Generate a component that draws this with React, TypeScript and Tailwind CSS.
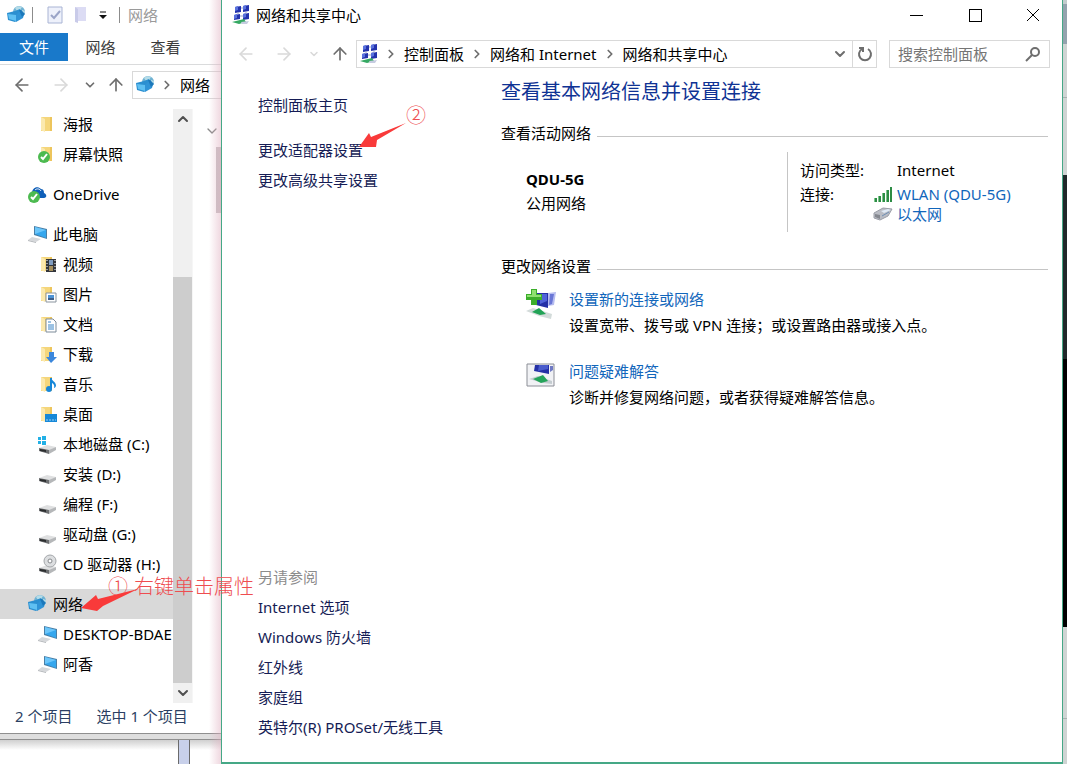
import type { ReactNode } from "react";
import { ArrowLeft, ArrowRight, ArrowUp, ChevronDown, ChevronRight, ChevronUp } from "lucide-react";

function NetworkIcon() {
  return (
    <svg className="h-5 w-5 shrink-0" viewBox="0 0 20 20">
      <circle cx="13" cy="7" r="6" fill="#6fb2d2" />
      <path d="M9 3c2-2 5-2 7-1l-2 3-3 1zM16 5l3 1c0 3-1 5-3 6z" fill="#b5dce8" />
      <path d="M1 8l8-2 5-2 1 9-6 4-7-2z" fill="#2b8fd0" />
      <path d="M2 9l8 1 0 6-7-2z" fill="#5fc0f2" />
      <path d="M10 10l5-5 3 4-1 4-7 4z" fill="#2f93d6" />
      <path d="M13 5l2 0 4 4-3 3z" fill="#1c78ba" />
    </svg>
  );
}

function ComputerIcon() {
  return (
    <svg className="h-5 w-5 shrink-0" viewBox="0 0 20 20">
      <path d="M7 2l13 3v10L7 11z" fill="#4a7fa6" />
      <path d="M8 3l11 3v8L8 10z" fill="#35a7ee" />
      <path d="M8 3l11 3-11 4z" fill="#6cc6fa" />
      <path d="M5 13l9 2-5 3-8-2z" fill="#d6d8db" />
      <path d="M1 16l8 2v1l-8-2z" fill="#b4b7bb" />
    </svg>
  );
}

function OneDriveIcon() {
  return (
    <svg className="h-5 w-5 shrink-0" viewBox="0 0 20 20">
      <path d="M5 9c0-5 5-8 9-4 3 0 3 3 3 4 3 1 3 5 0 5H8z" fill="#0f5fb8" />
      <path d="M8 6c2-2 5-1 6 1" stroke="#fff" strokeWidth="1" fill="none" />
      <circle cx="7" cy="13" r="6" fill="#4cba50" />
      <path d="M4 13l2 2 4-5" stroke="#fff" strokeWidth="2" fill="none" />
    </svg>
  );
}

// Yellow folder with an optional badge drawn over its lower right corner
function FolderIcon({ children }: { children?: ReactNode }) {
  return (
    <svg className="h-5 w-5 shrink-0" viewBox="0 0 20 20">
      <path d="M4 3h11v14H4z" fill="#f5d67b" />
      <path d="M4 3l4 2v13l-4-2z" fill="#fbe9ae" />
      <path d="M13 3h2v14h-2z" fill="#edc55c" />
      {children}
    </svg>
  );
}

function DriveIcon({ children }: { children?: ReactNode }) {
  return (
    <svg className="h-5 w-5 shrink-0" viewBox="0 0 20 20">
      <path d="M2 14l8-3 9 2-7 4z" fill="#dfe0e1" />
      <path d="M2 14l10 2v4L2 17z" fill="#6c6e70" />
      <path d="M12 16l7-3v3l-7 4z" fill="#b5b7b9" />
      <path d="M3 15l6 1v2l-6-1z" fill="#2b2d2f" />
      {children}
    </svg>
  );
}

function CenterIcon() {
  return (
    <svg className="h-5 w-5 shrink-0" viewBox="0 0 20 20">
      <path d="M4 2l6-1v6l-6 1zM12 1l6-1v6l-6 1zM3 10l6-1v5l-6 1zM12 9l6-1v6l-6 1z" fill="#2433ad" />
      <path d="M4 2l3-1v4l-3 1zM12 1l3-1v4l-3 1zM3 10l3-1v4l-3 1zM12 9l3-1v4l-3 1z" fill="#5a72dd" />
      <path d="M10 3h2M9 11h3M7 7v2M15 7v2" stroke="#9aa3c8" />
      <path d="M1 17l12-3 2 3-7 2z" fill="#35a862" />
      <path d="M10 17l8-1-2 3-5 0z" fill="#c6cbe0" />
    </svg>
  );
}

function SetupIcon() {
  return (
    <svg className="h-[30px] w-[30px] shrink-0" viewBox="0 0 30 30">
      <path d="M11 4h11v15l-12-3z" fill="#2430a6" />
      <path d="M14 5h7v7l-7 3z" fill="#5063d8" />
      <path d="M22 4l8-1-2 13-6 1z" fill="#b7bdf0" />
      <path d="M24 5h4l-2 10-3 1z" fill="#6a77d6" />
      <path d="M0 22l7-3 19 6-1 5-12-3z" fill="#d3dbda" />
      <path d="M6 23l7-4 7 6-6 1z" fill="#22a356" />
      <path d="M5 0h6v5h5v6h-5v5H5v-5H0V5h5z" fill="#3cae2b" />
      <path d="M6 1h4v5h5v2H1V6h5z" fill="#8fe070" />
    </svg>
  );
}

function TroubleshootIcon() {
  return (
    <svg className="h-[30px] w-[30px] shrink-0" viewBox="0 0 30 30">
      <path d="M1 3h27v22H1z" fill="#f1f2f5" stroke="#8b8e96" />
      <path d="M9 4h14v9L8 10z" fill="#2430a6" />
      <path d="M13 4h9v4l-10 2z" fill="#4a5ccc" />
      <path d="M24 5h3v4l-3 2z" fill="#6f79c5" />
      <path d="M3 18l9-3 14 5v3l-9-1z" fill="#c4ccd0" />
      <path d="M7 18l10-4 5 6-7 2z" fill="#25a45a" />
    </svg>
  );
}

const tree = [
  { name: "海报", icon: <FolderIcon />, child: true },
  {
    name: "屏幕快照",
    child: true,
    icon: (
      <FolderIcon>
        <circle cx="7" cy="13" r="6" fill="#4cba50" />
        <path d="M4 13l2 2 4-5" stroke="#fff" strokeWidth="2" fill="none" />
      </FolderIcon>
    ),
  },
  { name: "OneDrive", icon: <OneDriveIcon />, gap: true },
  { name: "此电脑", icon: <ComputerIcon />, gap: true },
  {
    name: "视频",
    child: true,
    icon: (
      <FolderIcon>
        <path d="M9 5h10v13H9z" fill="#33363c" />
        <path d="M12 6h4v5h-4z" fill="#7f9cc0" />
        <path d="M12 12h4v5h-4z" fill="#a58f5d" />
        <path d="M10 6v12M18 6v12" stroke="#fff" strokeDasharray="1 2" />
      </FolderIcon>
    ),
  },
  {
    name: "图片",
    child: true,
    icon: (
      <FolderIcon>
        <path d="M9 9h10v9H9z" fill="#fff" stroke="#8a949e" />
        <path d="M11 11h6v3h-6z" fill="#4d93d6" />
        <path d="M11 14h6v2h-6z" fill="#3f5f8a" />
      </FolderIcon>
    ),
  },
  {
    name: "文档",
    child: true,
    icon: (
      <FolderIcon>
        <path d="M9 5h7l3 3v10H9z" fill="#fff" stroke="#7c8b99" />
        <path d="M11 8h3M11 11h6M11 13h6M11 15h6" stroke="#3a86c8" />
      </FolderIcon>
    ),
  },
  {
    name: "下载",
    child: true,
    icon: (
      <FolderIcon>
        <path d="M12 8h5v5h3l-6 6-5-6h3z" fill="#3b87dc" />
      </FolderIcon>
    ),
  },
  {
    name: "音乐",
    child: true,
    icon: (
      <FolderIcon>
        <path d="M14 4v11" stroke="#1787d8" strokeWidth="2" />
        <path d="M14 3c0 4 5 4 5 9-1 2-2 2-2 2 1-3-1-5-3-5z" fill="#1787d8" />
        <ellipse cx="12" cy="15" rx="3" ry="3" fill="#1787d8" />
      </FolderIcon>
    ),
  },
  {
    name: "桌面",
    child: true,
    icon: (
      <FolderIcon>
        <path d="M8 10h12v8H8z" fill="#1688d8" />
        <path d="M9 16h10" stroke="#9bd1f5" strokeDasharray="2 1" />
      </FolderIcon>
    ),
  },
  {
    name: "本地磁盘 (C:)",
    child: true,
    icon: (
      <DriveIcon>
        <path d="M1 3h3v3H1zM5 2h4v4H5zM1 7h3v3H1zM5 7h4v4H5z" fill="#22b0e6" />
      </DriveIcon>
    ),
  },
  { name: "安装 (D:)", icon: <DriveIcon />, child: true },
  { name: "编程 (F:)", icon: <DriveIcon />, child: true },
  { name: "驱动盘 (G:)", icon: <DriveIcon />, child: true },
  {
    name: "CD 驱动器 (H:)",
    child: true,
    icon: (
      <DriveIcon>
        <circle cx="13" cy="7" r="6" fill="#dcdee0" stroke="#a4a7aa" />
        <circle cx="13" cy="7" r="2" fill="#fff" stroke="#85888b" />
      </DriveIcon>
    ),
  },
  { name: "网络", icon: <NetworkIcon />, gap: true, selected: true },
  { name: "DESKTOP-BDAE", icon: <ComputerIcon />, child: true },
  { name: "阿香", icon: <ComputerIcon />, child: true },
];

const seeAlso = ["Internet 选项", "Windows 防火墙", "红外线", "家庭组", "英特尔(R) PROSet/无线工具"];

function Explorer() {
  return (
    <section className="relative flex w-[221px] shrink-0 flex-col overflow-hidden bg-white">
      <header className="flex h-[33px] items-center pb-1 pl-1.5">
        <NetworkIcon />
        <span className="ml-1.5 h-4 w-px bg-[#8c8c8c]" />
        <button aria-label="属性" className="ml-3.5">
          <svg className="h-[18px] w-4" viewBox="0 0 16 18">
            <path d="M1 1h14v16H1z" fill="#eef1fb" stroke="#a9b4d4" />
            <path d="M4 9l3 3 6-7" stroke="#9ba5c8" strokeWidth="2" fill="none" />
          </svg>
        </button>
        <button aria-label="新建文件夹" className="ml-3">
          <svg className="h-[18px] w-3" viewBox="0 0 12 18">
            <path d="M0 1h11v14H0z" fill="#dcdcf4" />
            <path d="M0 1l3 2v14l-3-1z" fill="#c9cbe9" />
          </svg>
        </button>
        <button aria-label="自定义快速访问工具栏" className="ml-3">
          <svg className="h-2 w-2" viewBox="0 0 8 8">
            <path d="M1 1h6" stroke="#111" />
            <path d="M0 4h8L4 8z" fill="#111" />
          </svg>
        </button>
        <span className="ml-3 h-4 w-px bg-[#8c8c8c]" />
        <span className="ml-2 text-[#9a9a9a]">网络</span>
      </header>
      <nav className="flex h-8 items-start border-b border-[#dadbdc] text-[#3c3c3c]">
        <button className="h-7 w-[68px] bg-[#1979ca] text-white">文件</button>
        <button className="h-7 w-[65px]">网络</button>
        <button className="h-7 w-[65px]">查看</button>
      </nav>
      <div className="flex h-11 shrink-0 items-center pb-1 text-[#6e6e6e]">
        <button aria-label="后退" className="flex w-11 justify-center"><ArrowLeft size={20} /></button>
        <button aria-label="前进" className="flex w-[34px] justify-center text-[#d9d9d9]"><ArrowRight size={20} /></button>
        <button aria-label="最近浏览的位置" className="flex w-6 justify-center"><ChevronDown size={14} strokeWidth={3} /></button>
        <button aria-label="上移" className="flex w-7 justify-center"><ArrowUp size={20} /></button>
        <div className="ml-0.5 flex h-7 flex-1 items-center border border-r-0 border-[#d9d9d9] pl-0.5">
          <NetworkIcon />
          <ChevronRight size={14} strokeWidth={3} className="mr-1.5 ml-[5px]" />
          <span className="text-black">网络</span>
        </div>
      </div>
      <div className="flex flex-1">
        <ul className="w-[173px] overflow-hidden pb-6">
          {tree.map((item) => (
            <li key={item.name} className={item.gap ? "mt-2.5" : ""}>
              <a
                href="#"
                className={`flex h-[30px] items-center gap-1.5 whitespace-nowrap ${item.child ? "pl-[37px]" : "pl-[27px]"} ${item.selected ? "bg-[#d9d9d9]" : ""}`}
              >
                {item.icon}
                {item.name}
              </a>
            </li>
          ))}
        </ul>
        <div className="flex w-[19px] flex-col bg-[#f0f0f0] text-[#505050]">
          <button aria-label="向上滚动" className="flex h-5 items-center justify-center"><ChevronUp size={16} strokeWidth={3} /></button>
          <div className="flex flex-1 flex-col pt-[148px]">
            <div className="flex-1 bg-[#cdcdcd]" />
          </div>
          <button aria-label="向下滚动" className="flex h-5 items-center justify-center"><ChevronDown size={16} strokeWidth={3} /></button>
        </div>
        <div className="flex flex-1 flex-col items-end border-l border-[#f6f6f6] pt-3.5 text-[#8a8a8a]">
          <ChevronDown size={16} strokeWidth={2} className="mr-px" />
          <div className="mt-2 h-[66px] w-[5px] bg-[#c8c2c5]" />
        </div>
      </div>
      <footer className="flex h-[30px] items-center gap-6 pb-1 pl-[15px] text-[#2b3f63]">
        <span>2 个项目</span>
        <span>选中 1 个项目</span>
      </footer>
      <div className="h-[7px] border-y border-[#8f8f8f] bg-[#dedede]" />
      <div className="flex h-[25px] bg-linear-to-b from-[#d0d0d0] to-white to-40% pl-[178px]">
        <div className="w-3 border-x border-[#6b6b6b] bg-[#c8d0ea]" />
      </div>
      {/* shade that the front window casts */}
      <div className="pointer-events-none absolute inset-y-0 right-0 w-3 bg-linear-to-r from-transparent to-[#e0b0c0]/50" />
    </section>
  );
}

function SectionTitle({ children }: { children: ReactNode }) {
  return (
    <div className="flex items-center gap-1.5">
      <h2>{children}</h2>
      <span className="mt-1.5 h-px flex-1 bg-[#c5c5c5]" />
    </div>
  );
}

function SharingCenter() {
  return (
    <section className="flex flex-1 flex-col border border-t-0 border-b-2 border-[#45a886] bg-white">
      <header className="flex h-[29px] items-center gap-[5px] pl-[9px]">
        <CenterIcon />
        <h1 className="flex-1">网络和共享中心</h1>
        <div className="flex">
          <button aria-label="最小化" className="flex w-[58px] justify-center">
            <svg className="h-3.5 w-3.5" viewBox="0 0 14 14" fill="none" stroke="#000" shapeRendering="crispEdges">
              <path d="M0 7h13" />
            </svg>
          </button>
          <button aria-label="最大化" className="flex w-[58px] justify-center">
            <svg className="h-3.5 w-3.5" viewBox="0 0 14 14" fill="none" stroke="#000" shapeRendering="crispEdges">
              <path d="M1 1h12v12H1z" />
            </svg>
          </button>
          <button aria-label="关闭" className="flex w-[58px] justify-center">
            <svg className="h-3.5 w-3.5" viewBox="0 0 14 14" fill="none" stroke="#000">
              <path d="M1 1l12 12M13 1L1 13" />
            </svg>
          </button>
        </div>
      </header>
      <div className="flex h-[50px] items-center pr-3 text-[#6e6e6e]">
        <button aria-label="后退" className="flex w-12 justify-center text-[#d9d9d9]"><ArrowLeft size={20} /></button>
        <button aria-label="前进" className="flex w-7 justify-center text-[#d9d9d9]"><ArrowRight size={20} /></button>
        <button aria-label="最近浏览的位置" className="flex w-8 justify-center text-[#d9d9d9]"><ChevronDown size={12} strokeWidth={3} /></button>
        <button aria-label="上移" className="flex w-5 justify-center"><ArrowUp size={20} /></button>
        <div className="ml-1.5 flex h-7 flex-1 items-center border border-[#d9d9d9] pl-0.5">
          <CenterIcon />
          <ChevronRight size={14} strokeWidth={3} className="mr-1.5 ml-[5px]" />
          <a href="#" className="text-black">控制面板</a>
          <ChevronRight size={14} strokeWidth={3} className="mx-1.5" />
          <a href="#" className="text-black">网络和 Internet</a>
          <ChevronRight size={14} strokeWidth={3} className="mx-1.5" />
          <a href="#" className="text-black">网络和共享中心</a>
          <button aria-label="以前的位置" className="ml-auto flex w-6 justify-center"><ChevronDown size={16} strokeWidth={3} /></button>
          <button aria-label="刷新" className="flex h-full w-6 items-center justify-center border-l border-[#d9d9d9]">
            <svg className="h-4 w-4" viewBox="0 0 16 16" fill="none" stroke="currentColor" strokeWidth="2">
              <path d="M11 3a6 6 0 1 1-6 0" />
              <path d="M2 2h4v4" />
            </svg>
          </button>
        </div>
        <label className="ml-3 flex h-7 w-[161px] items-center border border-[#d9d9d9] px-2">
          <input aria-label="搜索控制面板" placeholder="搜索控制面板" className="w-full min-w-0 outline-none placeholder:text-[#757575]" />
          <svg className="h-4 w-4 shrink-0" viewBox="0 0 16 16" fill="none" stroke="currentColor" strokeWidth="2">
            <circle cx="10" cy="6" r="4" />
            <path d="M7 9l-6 6" />
          </svg>
        </label>
      </div>
      <div className="flex flex-1">
        <aside className="flex w-[279px] shrink-0 flex-col pt-[11px] pb-5 pl-9 leading-[30px] text-[#151c55]">
          <a href="#">控制面板主页</a>
          <a href="#" className="mt-[15px]">更改适配器设置</a>
          <a href="#">更改高级共享设置</a>
          <h2 className="mt-auto text-[#8c8c8c]">另请参阅</h2>
          {seeAlso.map((name) => (
            <a key={name} href="#">{name}</a>
          ))}
        </aside>
        <main className="flex-1 pr-3.5">
          <h2 className="mb-[18px] text-[20px] leading-[26px] text-[#0f3394]">查看基本网络信息并设置连接</h2>
          <SectionTitle>查看活动网络</SectionTitle>
          <div className="mt-[9px] mb-6 flex h-20 pl-[25px]">
            <div className="flex-1 pt-[15px] leading-6">
              <p className="font-bold">QDU-5G</p>
              <p>公用网络</p>
            </div>
            <dl className="grid w-[261px] grid-cols-[73px_1fr] content-start gap-y-1 border-l border-[#c5c5c5] pt-2 pl-3">
              <dt>访问类型:</dt>
              <dd className="pl-6">Internet</dd>
              <dt>连接:</dt>
              <dd className="text-[#1166bb]">
                <a href="#" className="flex items-center gap-1">
                  <svg className="h-5 w-5" viewBox="0 0 20 20">
                    <path d="M1 14h3v4H1zM5 12h3v6H5zM9 9h3v9H9zM13 6h3v12h-3zM17 3h2v15h-2z" fill="#2d8c45" />
                    <path d="M1 14h1v4H1zM5 12h1v6H5zM9 9h1v9H9zM13 6h1v12h-1z" fill="#7cc68b" />
                  </svg>
                  WLAN (QDU-5G)
                </a>
                <a href="#" className="flex items-center gap-1">
                  <svg className="h-5 w-5" viewBox="0 0 20 20">
                    <path d="M1 9l9-5 9 1-4 7-8 4-6-2z" fill="#b9bcc4" stroke="#9b9ea7" />
                    <path d="M8 7l7-2 3 1-7 3z" fill="#dfe9f5" />
                    <path d="M2 10l5 1v4l-5-2z" fill="#85888f" />
                    <path d="M9 12l7-4" stroke="#6f8fb5" />
                  </svg>
                  以太网
                </a>
              </dd>
            </dl>
          </div>
          <SectionTitle>更改网络设置</SectionTitle>
          <div className="mt-[13px] flex flex-col gap-[26px] pl-[25px]">
            <div className="flex gap-[13px]">
              <SetupIcon />
              <div>
                <a href="#" className="text-[#1166bb]">设置新的连接或网络</a>
                <p className="mt-1.5">设置宽带、拨号或 VPN 连接；或设置路由器或接入点。</p>
              </div>
            </div>
            <div className="flex gap-[13px]">
              <TroubleshootIcon />
              <div>
                <a href="#" className="text-[#1166bb]">问题疑难解答</a>
                <p className="mt-1.5">诊断并修复网络问题，或者获得疑难解答信息。</p>
              </div>
            </div>
          </div>
        </main>
      </div>
    </section>
  );
}

export default function App() {
  return (
    <div className="relative flex min-h-screen bg-[#d3dcd8] font-['Noto_Sans','Noto_Sans_CJK_SC',sans-serif] text-[15px] leading-5 text-black">
      <Explorer />
      <div className="flex flex-1 flex-col">
        <SharingCenter />
        <div className="h-px bg-[#a9cfbd] pl-[325px]">
          <div className="w-[312px] border-t border-dashed border-[#222]" />
        </div>
      </div>
      {/* windows that show behind the right edge */}
      <div className="flex w-1 shrink-0 flex-col bg-[#cfd4d3]">
        <div className="h-11 border-t-4 border-[#c3cccd] bg-[#94a3ae]" />
        <div className="h-[54px] border-b border-[#a9b0b0]" />
        <div className="h-[77px]" />
        <div className="h-[184px] bg-[#20282a]" />
        <div className="h-[268px] bg-black" />
        <div className="h-[92px] border-b border-[#a9b0b0]" />
      </div>

      {/* hand-made notes over the windows */}
      <div className="pointer-events-none absolute top-[577px] left-[108px] flex gap-1.5 font-['Liberation_Serif','Noto_Sans_CJK_SC',serif] text-[20px] leading-5 font-light text-[#ee4d50]">
        <span>①</span>
        <span>右键单击属性</span>
      </div>
      <svg className="pointer-events-none absolute top-[588px] left-[81px] h-6 w-[60px]" viewBox="0 0 60 24">
        <path d="M0 20l15-13 2 4L57 1 22 18l-6 5z" fill="#f93a3a" />
      </svg>
      <span className="pointer-events-none absolute top-[106px] left-[406px] font-['Liberation_Serif','Noto_Sans_CJK_SC',serif] text-[20px] leading-5 font-light text-[#ee4d50]">②</span>
      <svg className="pointer-events-none absolute top-[122px] left-[359px] h-7 w-12" viewBox="0 0 48 28">
        <path d="M0 25l10-14 2 4L47 1 18 18l-1 7z" fill="#f93a3a" />
      </svg>
    </div>
  );
}
